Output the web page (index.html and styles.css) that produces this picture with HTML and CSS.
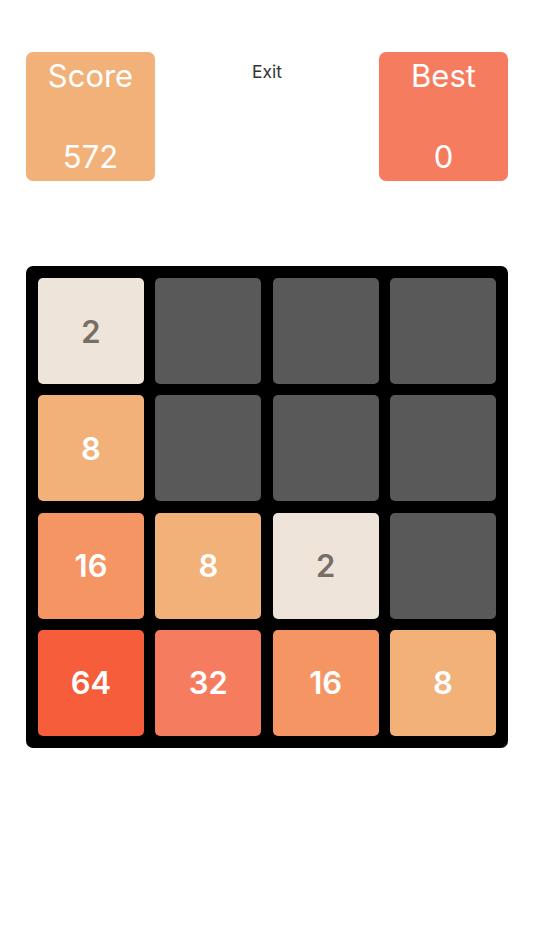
FILE: index.html
```html
<!DOCTYPE html>
<html>
<head>
<meta charset="utf-8">
<link rel="stylesheet" href="styles.css">
</head>
<body>
<div class="page">
  <header class="top">
    <div class="stat stat-score">
      <div class="stat-label">Score</div>
      <div class="stat-value">572</div>
    </div>
    <div class="exit">Exit</div>
    <div class="stat stat-best">
      <div class="stat-label">Best</div>
      <div class="stat-value">0</div>
    </div>
  </header>
  <main class="board">
    <div class="tile t2">2</div>
    <div class="tile empty"></div>
    <div class="tile empty"></div>
    <div class="tile empty"></div>
    <div class="tile t8">8</div>
    <div class="tile empty"></div>
    <div class="tile empty"></div>
    <div class="tile empty"></div>
    <div class="tile t16">16</div>
    <div class="tile t8">8</div>
    <div class="tile t2">2</div>
    <div class="tile empty"></div>
    <div class="tile t64">64</div>
    <div class="tile t32">32</div>
    <div class="tile t16">16</div>
    <div class="tile t8">8</div>
  </main>
</div>
</body>
</html>
```
FILE: styles.css
```css
html, body {
  margin: 0;
  padding: 0;
  background: #ffffff;
}
body {
  font-family: Inter, "Liberation Sans", sans-serif;
}
.page {
  width: 534px;
  padding: 52px 26px 0;
  box-sizing: border-box;
}
.top {
  display: flex;
  justify-content: space-between;
  align-items: flex-start;
}
.stat {
  width: 129px;
  height: 129px;
  border-radius: 7px;
  color: #ffffff;
  display: flex;
  flex-direction: column;
  justify-content: space-between;
  align-items: center;
  box-sizing: border-box;
  padding: 4px 0 4px;
}
.stat-score { background: #f2b179; }
.stat-best { background: #f67c5f; }
.stat-label, .stat-value {
  font-size: 31px;
  font-weight: 400;
  line-height: 40px;
  font-family: Inter, sans-serif;
}
.exit {
  font-size: 17.5px;
  color: #333333;
  margin-top: 9px;
}
.board {
  margin-top: 85px;
  width: 482px;
  height: 482px;
  box-sizing: border-box;
  background: #000000;
  border-radius: 7px;
  padding: 12px;
  display: grid;
  grid-template-columns: repeat(4, 1fr);
  grid-template-rows: repeat(4, 1fr);
  gap: 11.33px;
}
.tile {
  border-radius: 5px;
  display: flex;
  align-items: center;
  justify-content: center;
  font-size: 31px;
  font-weight: 600;
  color: #ffffff;
}
.empty { background: #595959; }
.t2 { background: #eee4da; color: #776e65; }
.t8 { background: #f2b179; }
.t16 { background: #f59563; }
.t32 { background: #f67c5f; }
.t64 { background: #f65e3b; }
```
